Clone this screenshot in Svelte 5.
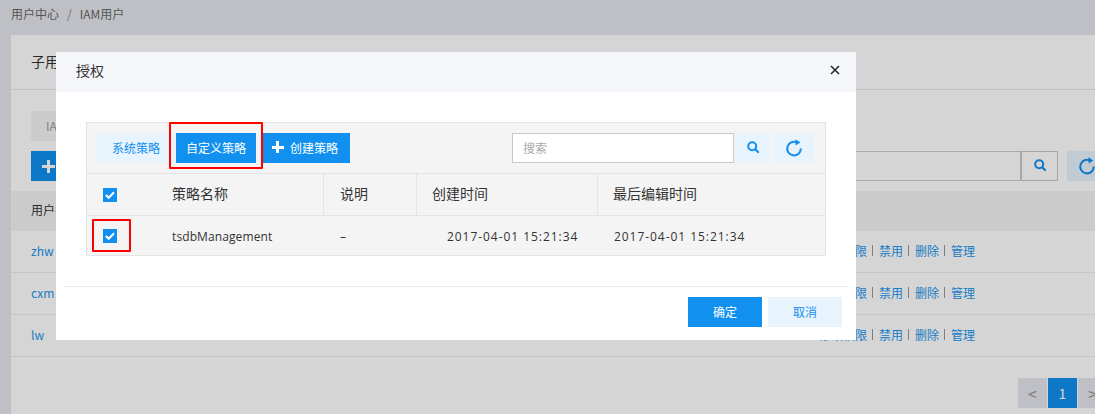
<script>
  const rows = [
    { name: 'zhw' },
    { name: 'cxm' },
    { name: 'lw' }
  ];
  const actions = ['禁用', '删除', '管理'];
</script>

{#snippet searchIcon(size)}
  <svg width={size} height={size} viewBox="0 0 14 14" fill="none" stroke="currentColor">
    <circle cx="6.2" cy="6.2" r="4" stroke-width="2" />
    <path d="M9.2 9.2 L12 12" stroke-width="2.2" stroke-linecap="round" />
  </svg>
{/snippet}

{#snippet refreshIcon()}
  <svg width="18" height="18" viewBox="0 0 18 18" fill="none">
    <path d="M12.2 3.6 A6.8 6.8 0 1 0 15.8 9.4" stroke="currentColor" stroke-width="2" />
    <path d="M10.4 0.2 L15.4 3.4 L10.6 6.6 Z" fill="currentColor" />
  </svg>
{/snippet}

{#snippet check()}
  <span class="check">
    <svg width="14" height="14" viewBox="0 0 14 14" fill="none">
      <path d="M2.8 7 L5.7 9.8 L11 4.3" stroke="#fff" stroke-width="2" />
    </svg>
  </span>
{/snippet}

<div class="page">
  <div class="crumbs"><span>用户中心</span><span class="sep">/</span><span>IAM用户</span></div>

  <div class="card">
    <div class="card-title">子用户</div>
    <div class="card-body">
      <div class="tab">IAM用户</div>
      <div class="tools">
        <button class="add"><b class="plus"></b></button>
        <div class="bg-search">
          <div class="bg-input"></div>
          <button class="bg-btn search">{@render searchIcon(14)}</button>
          <button class="bg-btn refresh">{@render refreshIcon()}</button>
        </div>
      </div>
    </div>
    <div class="list-head">用户名</div>
    {#each rows as row}
      <div class="list-row">
        <a href="#top" class="link">{row.name}</a>
        <div class="ops">
          <a href="#top" class="link">修改权限</a>
          {#each actions as action}
            <i class="bar"></i><a href="#top" class="link">{action}</a>
          {/each}
        </div>
      </div>
    {/each}
    <div class="pager">
      <button class="pg">&lt;</button>
      <button class="pg on">1</button>
      <button class="pg">&gt;</button>
    </div>
  </div>
</div>

<div class="overlay">
  <div class="modal">
    <div class="modal-head">
      <span>授权</span>
      <svg class="close" width="10" height="10" viewBox="0 0 10 10">
        <path d="M1 1 L9 9 M9 1 L1 9" stroke="#222" stroke-width="1.5" />
      </svg>
    </div>
    <div class="modal-body">
      <div class="box">
        <div class="toolbar">
          <button class="btn light sys">系统策略</button>
          <button class="btn solid custom">自定义策略</button>
          <button class="btn solid create"><b class="plus"></b>创建策略</button>
          <input class="search" placeholder="搜索" />
          <button class="btn light s-btn">{@render searchIcon(14)}</button>
          <button class="btn light r-btn">{@render refreshIcon()}</button>
        </div>
        <div class="grid head">
          <div class="c0">{@render check()}</div>
          <div class="c1">策略名称</div>
          <div class="c2">说明</div>
          <div class="c3">创建时间</div>
          <div class="c4">最后编辑时间</div>
        </div>
        <div class="grid body">
          <div class="c0">{@render check()}</div>
          <div class="c1">tsdbManagement</div>
          <div class="c2">–</div>
          <div class="c3">2017-04-01 15:21:34</div>
          <div class="c4">2017-04-01 15:21:34</div>
        </div>
      </div>
    </div>
    <div class="modal-foot">
      <button class="btn solid act">确定</button>
      <button class="btn light act">取消</button>
    </div>
    <div class="mark m1"></div>
    <div class="mark m2"></div>
  </div>
</div>

<style>
  :global(body) {
    margin: 0;
    background: #e5e6ec;
    font-family: "Noto Sans CJK SC", "Noto Sans", sans-serif;
    font-size: 12px;
    color: #333;
    overflow: hidden;
  }
  button {
    font-family: inherit;
    border: 0;
    padding: 0;
    margin: 0;
  }
  .page {
    width: 1095px;
    height: 414px;
    overflow: hidden;
  }
  .crumbs {
    height: 35px;
    padding-left: 11px;
    display: flex;
    align-items: center;
    gap: 8px;
    box-sizing: border-box;
    padding-bottom: 8px;
    color: #666;
  }
  .sep { color: #888; }
  .card {
    margin-left: 11px;
    background: #fff;
    height: 379px;
    width: 1084px;
    overflow: hidden;
  }
  .card-title {
    height: 55px;
    box-sizing: border-box;
    border-bottom: 1px solid #e8e8e8;
    padding: 16px 0 0 20px;
    font-size: 14px;
    line-height: 20px;
  }
  .card-body { padding: 21px 0 10px 20px; }
  .tab {
    width: 80px;
    height: 30px;
    line-height: 30px;
    background: #f5f5f5;
    border-radius: 2px;
    padding-left: 15px;
    box-sizing: border-box;
    color: #999;
  }
  .tools {
    display: flex;
    margin-top: 10px;
    height: 30px;
    width: 1076px;
  }
  .add {
    width: 90px;
    height: 30px;
    background: #1190f0;
    display: flex;
    align-items: center;
    padding-left: 11px;
  }
  .add .plus { width: 13px; height: 13px; }
  .bg-search {
    margin-left: auto;
    display: flex;
    flex: none;
  }
  .bg-input {
    flex: none;
    width: 337px;
    height: 30px;
    box-sizing: border-box;
    border: 1px solid #ccc;
    background: #fff;
  }
  .bg-btn {
    flex: none;
    height: 30px;
    background: #e8f4fd;
    color: #1190f0;
    display: flex;
    align-items: center;
    justify-content: center;
  }
  .bg-btn.search { width: 37px; }
  .bg-btn.refresh { width: 40px; margin-left: 9px; }
  .list-head {
    height: 40px;
    line-height: 38px;
    background: #f3f3f3;
    padding-left: 20px;
    color: #333;
  }
  .list-row {
    height: 42px;
    box-sizing: border-box;
    border-bottom: 1px solid #eee;
    padding: 0 120px 2px 20px;
    display: flex;
    align-items: center;
    justify-content: space-between;
  }
  .link {
    color: #1c96ee;
    text-decoration: none;
    font-size: 12px;
  }
  .ops { display: flex; align-items: center; }
  .bar {
    width: 1px;
    height: 11px;
    background: #999;
    margin: 0 5.5px;
  }
  .pager {
    display: flex;
    gap: 1px;
    margin: 21px 0 0 1007px;
    width: 100px;
  }
  .pg {
    width: 29px;
    height: 30px;
    flex: none;
    background: #e5e6ec;
    color: #999;
    font-size: 16px;
    line-height: 28px;
  }
  .pg.on { background: #1190f0; color: #fff; font-size: 14px; }

  .overlay {
    position: fixed;
    inset: 0;
    background: rgba(0, 0, 0, 0.165);
    padding: 52px 0 0 56px;
    box-sizing: border-box;
  }
  .modal {
    position: relative;
    width: 800px;
    height: 288px;
    background: #fff;
  }
  .modal-head {
    height: 40px;
    box-sizing: border-box;
    background: #f5f6fa;
    display: flex;
    align-items: center;
    justify-content: space-between;
    padding: 0 16px 4px 20px;
    font-size: 14px;
    color: #333;
  }
  .modal-body { padding: 30px 30px 30px; }
  .box {
    border: 1px solid #e4e4e4;
    background: #f4f4f4;
    height: 134px;
    box-sizing: border-box;
  }
  .toolbar {
    display: flex;
    height: 51px;
    box-sizing: border-box;
    border-bottom: 1px solid #e4e4e4;
    padding: 10px 11px 10px 10px;
  }
  .btn {
    height: 30px;
    box-sizing: border-box;
    padding-bottom: 2px;
    font-size: 12px;
    flex: none;
    display: flex;
    align-items: center;
    justify-content: center;
  }
  .light { background: #e8f4fd; color: #1190f0; }
  .solid { background: #1190f0; color: #fff; }
  .sys { width: 78px; }
  .custom { width: 80px; margin-left: 1px; }
  .create { width: 88px; margin-left: 6px; padding-right: 2px; }
  .plus {
    display: block;
    flex: none;
    width: 12px;
    height: 12px;
    margin-right: 6px;
    background:
      linear-gradient(#fff, #fff) center / 100% 3px no-repeat,
      linear-gradient(#fff, #fff) center / 3px 100% no-repeat;
  }
  .search {
    margin-left: auto;
    width: 222px;
    height: 30px;
    box-sizing: border-box;
    border: 1px solid #c8c8c8;
    background: #fff;
    padding: 0 10px 2px;
    font-family: inherit;
    font-size: 12px;
    outline: none;
  }
  .search::placeholder { color: #aaa; }
  .s-btn { width: 35px; margin-left: 1px; }
  .r-btn { width: 40px; margin-left: 4px; padding-bottom: 0; }
  .grid {
    position: relative;
    display: grid;
    grid-template-columns: 236px 93px 181px 228px;
  }
  .grid > div {
    display: flex;
    align-items: center;
    box-sizing: border-box;
  }
  .head {
    height: 41px;
    border-bottom: 1px solid #e4e4e4;
    font-size: 14px;
  }
  .body {
    height: 40px;
    font-family: "Open Sans", sans-serif;
    font-size: 12px;
    letter-spacing: 0.95px;
  }
  .body > .c1 { letter-spacing: 0.1px; }
  .grid > .c0 { position: absolute; left: 16px; height: 100%; }
  .grid > .c1 { padding-left: 85px; }
  .grid > .c2 { padding-left: 17px; }
  .grid > .c3 { padding-left: 31px; }
  .grid > .c4 { padding-left: 17px; }
  .head > .c1, .head > .c2, .head > .c3, .head > .c4 { padding-bottom: 4px; }
  .head > .c2, .head > .c3, .head > .c4 { border-left: 1px solid #e4e4e4; }
  .head > .c2 { padding-left: 16px; }
  .head > .c3 { padding-left: 15px; }
  .head > .c4 { padding-left: 15px; }
  .check {
    width: 14px;
    height: 14px;
    background: #1190f0;
    display: block;
    line-height: 0;
  }
  .modal-foot {
    margin: 0 8px;
    border-top: 1px solid #eee;
    padding: 10px 6px 0 0;
    display: flex;
    justify-content: flex-end;
    gap: 6px;
  }
  .act { width: 74px; }
  .close { display: block; }
  .mark {
    position: absolute;
    border: 2px solid #f00;
    box-sizing: border-box;
    border-radius: 1px;
  }
  .m1 { left: 113px; top: 70px; width: 94px; height: 47px; }
  .m2 { left: 36px; top: 167px; width: 39px; height: 33px; }
</style>
